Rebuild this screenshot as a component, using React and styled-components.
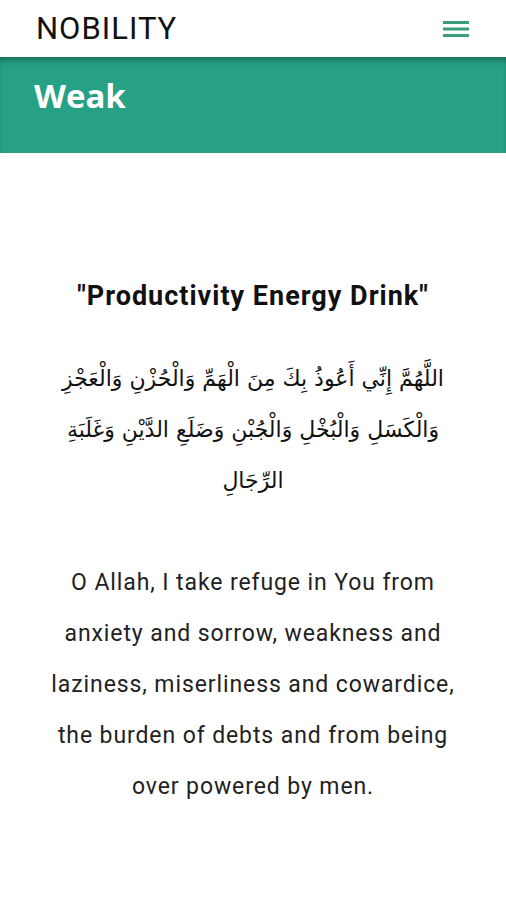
import React from "react";
import styled, { createGlobalStyle } from "styled-components";

const GlobalStyle = createGlobalStyle`
  html, body {
    margin: 0;
    padding: 0;
    background: #fff;
  }
  body {
    font-family: Roboto, "Liberation Sans", sans-serif;
  }
`;

const Page = styled.div`
  width: 506px;
  min-height: 900px;
  background: #fff;
`;

const TopBar = styled.header`
  height: 57px;
  display: flex;
  align-items: center;
  justify-content: space-between;
  padding: 0 36px;
  background: #fff;
  position: relative;
  z-index: 2;
`;

const Logo = styled.div`
  font-family: Roboto, "Liberation Sans", sans-serif;
  font-size: 31px;
  font-weight: 400;
  color: #111;
  letter-spacing: 1px;
`;

const MenuButton = styled.button`
  border: none;
  background: none;
  padding: 0;
  display: flex;
  color: #3a9d7c;
  margin-right: 1px;
`;

const Banner = styled.div`
  height: 96px;
  background: #26a185;
  box-shadow: inset 0 6px 6px -3px rgba(0, 0, 0, 0.35);
  padding: 16px 34px 0;
  box-sizing: border-box;
`;

const BannerTitle = styled.h1`
  margin: 0;
  font-family: "Open Sans", sans-serif;
  font-weight: 700;
  font-size: 33px;
  color: #fff;
`;

const Content = styled.main`
  padding: 127px 20px 0;
  text-align: center;
`;

const Title = styled.h2`
  margin: 0 0 41px;
  font-family: Roboto, sans-serif;
  font-weight: 700;
  font-size: 27px;
  letter-spacing: 1px;
  color: #111;
`;

const Arabic = styled.p`
  margin: 0 0 51px;
  direction: rtl;
  font-family: "DejaVu Sans", "Noto Sans", sans-serif;
  font-size: 22px;
  line-height: 51px;
  color: #111;
`;

const Translation = styled.p`
  margin: 0;
  font-family: Roboto, sans-serif;
  font-size: 23px;
  letter-spacing: 0.9px;
  line-height: 51px;
  color: #222;
  padding: 0 20px;
`;

const MenuIcon = () => (
  <svg width="26" height="18" viewBox="0 0 26 18">
    <rect x="0" y="1" width="26" height="3" fill="currentColor" />
    <rect x="0" y="7.5" width="26" height="3" fill="currentColor" />
    <rect x="0" y="14" width="26" height="3" fill="currentColor" />
  </svg>
);

export default function App() {
  return (
    <Page>
      <GlobalStyle />
      <TopBar>
        <Logo>NOBILITY</Logo>
        <MenuButton aria-label="menu">
          <MenuIcon />
        </MenuButton>
      </TopBar>
      <Banner>
        <BannerTitle>Weak</BannerTitle>
      </Banner>
      <Content>
        <Title>"Productivity Energy Drink"</Title>
        <Arabic>
          اللَّهُمَّ إِنِّي أَعُوذُ بِكَ مِنَ الْهَمِّ وَالْحُزْنِ وَالْعَجْزِ
          <br />
          وَالْكَسَلِ وَالْبُخْلِ وَالْجُبْنِ وَضَلَعِ الدَّيْنِ وَغَلَبَةِ
          <br />
          الرِّجَالِ
        </Arabic>
        <Translation>
          O Allah, I take refuge in You from anxiety and sorrow, weakness and
          laziness, miserliness and cowardice, the burden of debts and from
          being over powered by men.
        </Translation>
      </Content>
    </Page>
  );
}
